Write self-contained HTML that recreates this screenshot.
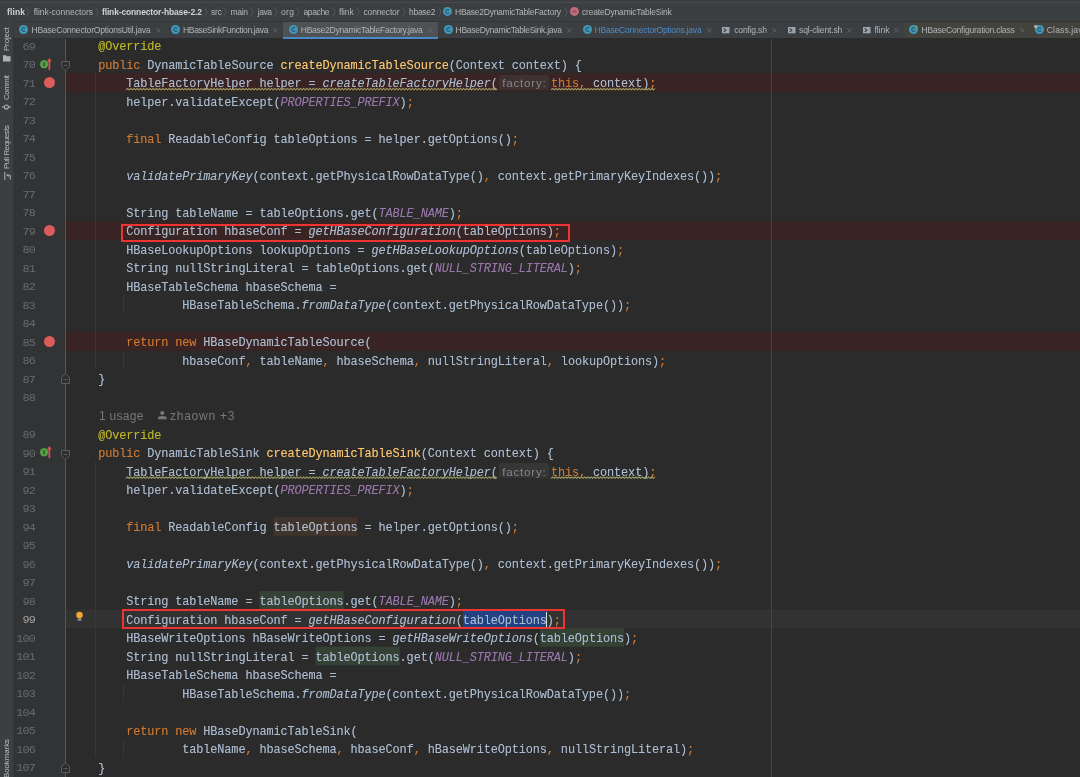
<!DOCTYPE html>
<html><head><meta charset="utf-8"><title>IDE</title><style>
*{margin:0;padding:0;box-sizing:border-box}
html,body{width:1080px;height:777px;overflow:hidden;background:#2b2b2b}
body{position:relative;font-family:"Liberation Sans",sans-serif;color:#a9b7c6}
.abs{position:absolute}
#top{left:0;top:0;width:1080px;height:21px;background:#3c3f41}
#topline{left:0;top:2px;width:1080px;height:1px;background:#47494b}
#sep1{left:0;top:20.7px;width:1080px;height:1px;background:#323436}
#tabs{left:0;top:21.7px;width:1080px;height:16.6px;background:#3c3f41}
#left{left:0;top:21px;width:13px;height:756px;background:#3c3f41}
#leftb{left:13px;top:21px;width:1px;height:756px;background:#353739}
#gutter{left:14px;top:38.3px;width:51px;height:738.7px;background:#313335}
#gline{left:65px;top:39px;width:1px;height:738px;background:#555555}
#margin{left:771px;top:39px;width:1px;height:738px;background:#454545}
.bc{top:3.5px;height:16px;line-height:16px;font-size:8.5px;color:#b4b6b8;white-space:pre}
.bcb{font-weight:bold;color:#cfd1d3}
.tab{top:22.3px;height:16px;line-height:16px;font-size:8.6px;color:#b2b4b6;white-space:pre}
.tx{top:22px;height:16px;line-height:16px;font-size:9px;color:#6e7173;white-space:pre;width:10px;text-align:center}
.row{left:66px;width:1014px;height:18.5px}
.bp{background:#3a2323}
.cur{background:#323232}
.code{font-family:"Liberation Mono",monospace;font-size:11.9px;letter-spacing:-0.1261621093750005px;white-space:pre;height:18.5px;line-height:18.5px;color:#abbcd0}
.ln{font-family:"Liberation Mono",monospace;font-size:11.8px;letter-spacing:-0.9px;white-space:pre;height:18.5px;line-height:18.5px;color:#676b6f;left:5px;width:29.9px;text-align:right}
.k{color:#cc7832}.m{color:#ffc66d}.a{color:#bbb529}.i{font-style:italic}.c{color:#9876aa;font-style:italic}

.ig{width:1px;background:#373737}
.hint{background:#363636;border-radius:2.5px;height:15px}
.hintt{font-size:11.6px;color:#858789;height:15px;line-height:15px;white-space:pre}
  .inl{font-size:12px;color:#787878;white-space:pre;height:18.5px;line-height:18.5px}
.redbox{border:2.5px solid #ee3333}
.vt{font-size:7.8px;color:#bbbbbb;white-space:pre;transform-origin:0 0;transform:rotate(-90deg);height:10px;line-height:10px}
svg{position:absolute;overflow:visible}
.code,.ln,.tab,.bc,.vt,.hintt,.inl{filter:blur(0.25px)}
.code{text-shadow:0 0 0.4px color-mix(in srgb, currentColor 45%, transparent)}
</style></head><body>
<div class="abs" id="top"></div><div class="abs" id="topline"></div><div class="abs" id="sep1"></div>
<div class="abs" id="tabs"></div>
<div class="abs" style="left:903.5px;top:21.7px;width:176.5px;height:16.6px;background:#43423d"></div>
<div class="abs" style="left:283px;top:21.9px;width:155px;height:15.1px;background:#4e5254"></div>
<div class="abs" style="left:283px;top:37px;width:155px;height:2px;background:#4a88c7"></div>
<div class="abs" id="left"></div><div class="abs" id="leftb"></div>
<div class="abs" id="gutter"></div>
<div class="abs bc bcb" style="left:7.00px;letter-spacing:0.128px;">flink</div>
<div class="abs bc" style="left:33.75px;letter-spacing:-0.018px;">flink-connectors</div>
<div class="abs bc bcb" style="left:102.00px;letter-spacing:-0.144px;">flink-connector-hbase-2.2</div>
<div class="abs bc" style="left:211.00px;letter-spacing:-0.163px;">src</div>
<div class="abs bc" style="left:230.50px;letter-spacing:-0.308px;">main</div>
<div class="abs bc" style="left:257.71px;letter-spacing:-0.437px;">java</div>
<div class="abs bc" style="left:281.00px;letter-spacing:0.359px;">org</div>
<div class="abs bc" style="left:303.50px;letter-spacing:-0.376px;">apache</div>
<div class="abs bc" style="left:339.00px;letter-spacing:-0.095px;">flink</div>
<div class="abs bc" style="left:363.50px;letter-spacing:-0.167px;">connector</div>
<div class="abs bc" style="left:409.00px;letter-spacing:-0.276px;">hbase2</div>
<div class="abs bc" style="left:455.00px;letter-spacing:-0.249px;">HBase2DynamicTableFactory</div>
<div class="abs bc" style="left:582.00px;letter-spacing:-0.182px;">createDynamicTableSink</div>
<svg style="left:26.0px;top:6.8px" width="4" height="10" viewBox="0 0 4 10"><path d="M0.5 0.2 L3.2 5 L0.5 9.8" fill="none" stroke="#5c5f61" stroke-width="0.7"/></svg>
<svg style="left:94.5px;top:6.8px" width="4" height="10" viewBox="0 0 4 10"><path d="M0.5 0.2 L3.2 5 L0.5 9.8" fill="none" stroke="#5c5f61" stroke-width="0.7"/></svg>
<svg style="left:203.5px;top:6.8px" width="4" height="10" viewBox="0 0 4 10"><path d="M0.5 0.2 L3.2 5 L0.5 9.8" fill="none" stroke="#5c5f61" stroke-width="0.7"/></svg>
<svg style="left:223.0px;top:6.8px" width="4" height="10" viewBox="0 0 4 10"><path d="M0.5 0.2 L3.2 5 L0.5 9.8" fill="none" stroke="#5c5f61" stroke-width="0.7"/></svg>
<svg style="left:249.5px;top:6.8px" width="4" height="10" viewBox="0 0 4 10"><path d="M0.5 0.2 L3.2 5 L0.5 9.8" fill="none" stroke="#5c5f61" stroke-width="0.7"/></svg>
<svg style="left:273.5px;top:6.8px" width="4" height="10" viewBox="0 0 4 10"><path d="M0.5 0.2 L3.2 5 L0.5 9.8" fill="none" stroke="#5c5f61" stroke-width="0.7"/></svg>
<svg style="left:296.0px;top:6.8px" width="4" height="10" viewBox="0 0 4 10"><path d="M0.5 0.2 L3.2 5 L0.5 9.8" fill="none" stroke="#5c5f61" stroke-width="0.7"/></svg>
<svg style="left:331.5px;top:6.8px" width="4" height="10" viewBox="0 0 4 10"><path d="M0.5 0.2 L3.2 5 L0.5 9.8" fill="none" stroke="#5c5f61" stroke-width="0.7"/></svg>
<svg style="left:355.5px;top:6.8px" width="4" height="10" viewBox="0 0 4 10"><path d="M0.5 0.2 L3.2 5 L0.5 9.8" fill="none" stroke="#5c5f61" stroke-width="0.7"/></svg>
<svg style="left:401.5px;top:6.8px" width="4" height="10" viewBox="0 0 4 10"><path d="M0.5 0.2 L3.2 5 L0.5 9.8" fill="none" stroke="#5c5f61" stroke-width="0.7"/></svg>
<svg style="left:437.5px;top:6.8px" width="4" height="10" viewBox="0 0 4 10"><path d="M0.5 0.2 L3.2 5 L0.5 9.8" fill="none" stroke="#5c5f61" stroke-width="0.7"/></svg>
<svg style="left:564.0px;top:6.8px" width="4" height="10" viewBox="0 0 4 10"><path d="M0.5 0.2 L3.2 5 L0.5 9.8" fill="none" stroke="#5c5f61" stroke-width="0.7"/></svg>
<svg style="left:443.35px;top:6.95px" width="8.90" height="8.90" viewBox="0 0 10 10"><circle cx="5" cy="5" r="5" fill="#4098b8"/><path d="M6.8 3.7 A2.1 2.1 0 1 0 6.8 6.3" fill="none" stroke="#2b5a74" stroke-width="1.25"/></svg>
<svg style="left:570.05px;top:6.95px" width="8.90" height="8.90" viewBox="0 0 10 10"><circle cx="5" cy="5" r="5" fill="#bf6d7d"/><path d="M3.2 6.5 V4.3 M3.2 4.9 Q4.0 3.8 4.95 4.7 V6.5 M4.95 4.9 Q5.8 3.8 6.75 4.7 V6.5" fill="none" stroke="#7d4450" stroke-width="0.9"/></svg>
<svg style="left:19.30px;top:25.40px" width="9.00" height="9.00" viewBox="0 0 10 10"><circle cx="5" cy="5" r="5" fill="#4098b8"/><path d="M6.8 3.7 A2.1 2.1 0 1 0 6.8 6.3" fill="none" stroke="#2b5a74" stroke-width="1.25"/></svg>
<div class="abs tab" style="left:31.50px;letter-spacing:-0.224px;color:#b2b4b6">HBaseConnectorOptionsUtil.java</div>
<svg style="left:155.60px;top:27.7px" width="4.8" height="4.8" viewBox="0 0 6 6"><path d="M0.3 0.3 L5.7 5.7 M5.7 0.3 L0.3 5.7" stroke="#6a6d6f" stroke-width="0.95" fill="none"/></svg>
<svg style="left:170.80px;top:25.40px" width="9.00" height="9.00" viewBox="0 0 10 10"><circle cx="5" cy="5" r="5" fill="#4098b8"/><path d="M6.8 3.7 A2.1 2.1 0 1 0 6.8 6.3" fill="none" stroke="#2b5a74" stroke-width="1.25"/></svg>
<div class="abs tab" style="left:183.00px;letter-spacing:-0.390px;color:#b2b4b6">HBaseSinkFunction.java</div>
<svg style="left:273.35px;top:27.7px" width="4.8" height="4.8" viewBox="0 0 6 6"><path d="M0.3 0.3 L5.7 5.7 M5.7 0.3 L0.3 5.7" stroke="#6a6d6f" stroke-width="0.95" fill="none"/></svg>
<svg style="left:288.80px;top:25.40px" width="9.00" height="9.00" viewBox="0 0 10 10"><circle cx="5" cy="5" r="5" fill="#4098b8"/><path d="M6.8 3.7 A2.1 2.1 0 1 0 6.8 6.3" fill="none" stroke="#2b5a74" stroke-width="1.25"/></svg>
<div class="abs tab" style="left:300.75px;letter-spacing:-0.296px;color:#b2b4b6">HBase2DynamicTableFactory.java</div>
<svg style="left:428.10px;top:27.7px" width="4.8" height="4.8" viewBox="0 0 6 6"><path d="M0.3 0.3 L5.7 5.7 M5.7 0.3 L0.3 5.7" stroke="#6a6d6f" stroke-width="0.95" fill="none"/></svg>
<svg style="left:443.55px;top:25.40px" width="9.00" height="9.00" viewBox="0 0 10 10"><circle cx="5" cy="5" r="5" fill="#4098b8"/><path d="M6.8 3.7 A2.1 2.1 0 1 0 6.8 6.3" fill="none" stroke="#2b5a74" stroke-width="1.25"/></svg>
<div class="abs tab" style="left:455.50px;letter-spacing:-0.329px;color:#b2b4b6">HBaseDynamicTableSink.java</div>
<svg style="left:567.10px;top:27.7px" width="4.8" height="4.8" viewBox="0 0 6 6"><path d="M0.3 0.3 L5.7 5.7 M5.7 0.3 L0.3 5.7" stroke="#6a6d6f" stroke-width="0.95" fill="none"/></svg>
<svg style="left:582.55px;top:25.40px" width="9.00" height="9.00" viewBox="0 0 10 10"><circle cx="5" cy="5" r="5" fill="#4098b8"/><path d="M6.8 3.7 A2.1 2.1 0 1 0 6.8 6.3" fill="none" stroke="#2b5a74" stroke-width="1.25"/></svg>
<div class="abs tab" style="left:594.50px;letter-spacing:-0.242px;color:#4e8ac9">HBaseConnectorOptions.java</div>
<svg style="left:706.60px;top:27.7px" width="4.8" height="4.8" viewBox="0 0 6 6"><path d="M0.3 0.3 L5.7 5.7 M5.7 0.3 L0.3 5.7" stroke="#6a6d6f" stroke-width="0.95" fill="none"/></svg>
<svg style="left:722.25px;top:26.8px" width="7.5" height="6.3" viewBox="0 0 7.5 6.3"><rect x="0" y="0" width="7.5" height="6.3" fill="#9ba5ad"/><path d="M1.7 1.4 L3.9 3.15 L1.7 4.9" fill="none" stroke="#3c3f41" stroke-width="1.15"/></svg>
<div class="abs tab" style="left:734.25px;letter-spacing:-0.209px;color:#b2b4b6">config.sh</div>
<svg style="left:771.60px;top:27.7px" width="4.8" height="4.8" viewBox="0 0 6 6"><path d="M0.3 0.3 L5.7 5.7 M5.7 0.3 L0.3 5.7" stroke="#6a6d6f" stroke-width="0.95" fill="none"/></svg>
<svg style="left:787.50px;top:26.8px" width="7.5" height="6.3" viewBox="0 0 7.5 6.3"><rect x="0" y="0" width="7.5" height="6.3" fill="#9ba5ad"/><path d="M1.7 1.4 L3.9 3.15 L1.7 4.9" fill="none" stroke="#3c3f41" stroke-width="1.15"/></svg>
<div class="abs tab" style="left:799.00px;letter-spacing:-0.167px;color:#b2b4b6">sql-client.sh</div>
<svg style="left:846.60px;top:27.7px" width="4.8" height="4.8" viewBox="0 0 6 6"><path d="M0.3 0.3 L5.7 5.7 M5.7 0.3 L0.3 5.7" stroke="#6a6d6f" stroke-width="0.95" fill="none"/></svg>
<svg style="left:862.75px;top:26.8px" width="7.5" height="6.3" viewBox="0 0 7.5 6.3"><rect x="0" y="0" width="7.5" height="6.3" fill="#9ba5ad"/><path d="M1.7 1.4 L3.9 3.15 L1.7 4.9" fill="none" stroke="#3c3f41" stroke-width="1.15"/></svg>
<div class="abs tab" style="left:874.40px;letter-spacing:-0.052px;color:#b2b4b6">flink</div>
<svg style="left:893.90px;top:27.7px" width="4.8" height="4.8" viewBox="0 0 6 6"><path d="M0.3 0.3 L5.7 5.7 M5.7 0.3 L0.3 5.7" stroke="#6a6d6f" stroke-width="0.95" fill="none"/></svg>
<svg style="left:909.30px;top:25.40px" width="9.00" height="9.00" viewBox="0 0 10 10"><circle cx="5" cy="5" r="5" fill="#4098b8"/><path d="M6.8 3.7 A2.1 2.1 0 1 0 6.8 6.3" fill="none" stroke="#2b5a74" stroke-width="1.25"/></svg>
<div class="abs tab" style="left:921.50px;letter-spacing:-0.245px;color:#b2b4b6">HBaseConfiguration.class</div>
<svg style="left:1019.60px;top:27.7px" width="4.8" height="4.8" viewBox="0 0 6 6"><path d="M0.3 0.3 L5.7 5.7 M5.7 0.3 L0.3 5.7" stroke="#6a6d6f" stroke-width="0.95" fill="none"/></svg>
<svg style="left:1034.60px;top:25.40px" width="9.00" height="9.00" viewBox="0 0 10 10"><circle cx="5" cy="5" r="5" fill="#4098b8"/><path d="M6.8 3.7 A2.1 2.1 0 1 0 6.8 6.3" fill="none" stroke="#2b5a74" stroke-width="1.25"/></svg>
<div class="abs tab" style="left:1046.80px;letter-spacing:0.112px;color:#b2b4b6">Class.java</div>
<svg style="left:915px;top:25px" width="3.4" height="3.4" viewBox="0 0 4 4"><path d="M0.3 0.3 L3.8 2 L0.3 3.8 Z" fill="#62b543"/></svg>
<svg style="left:1034px;top:25px" width="3.6" height="3.2" viewBox="0 0 4 4"><rect x="0" y="0" width="4" height="4" rx="1" fill="#a8abad"/></svg>
<div class="abs vt" style="left:1.8px;top:50.80px;letter-spacing:-0.080px">Project</div>
<div class="abs vt" style="left:1.8px;top:100.00px;letter-spacing:-0.374px">Commit</div>
<div class="abs vt" style="left:1.8px;top:169.40px;letter-spacing:-0.344px">Pull Requests</div>
<div class="abs vt" style="left:1.8px;top:777.71px;letter-spacing:-0.001px">Bookmarks</div>
<svg style="left:3.2px;top:54.5px" width="7.5" height="6.5" viewBox="0 0 7.5 6.5"><path d="M0 0.3 H3 L3.8 1.3 H7.5 V6.5 H0 Z" fill="#afb1b3"/></svg>
<svg style="left:2px;top:103px" width="9" height="8" viewBox="0 0 9 8"><path d="M0 4 H9" stroke="#afb1b3" stroke-width="1"/><circle cx="4.4" cy="4" r="2" fill="#3c3f41" stroke="#afb1b3" stroke-width="1.1"/></svg>
<svg style="left:3.5px;top:172.2px" width="7" height="8" viewBox="0 0 7 8"><path d="M0.8 0 V8 M3 3.3 H6.2 V7.6 M4.4 1.9 L3 3.3 L4.4 4.7" stroke="#afb1b3" stroke-width="1" fill="none"/></svg>
<svg style="left:0;top:0" width="1080" height="777"><rect x="66" y="73.10" width="1014" height="18.7" fill="#3a2323"/></svg>
<svg style="left:0;top:0" width="1080" height="777"><rect x="66" y="221.10" width="1014" height="18.7" fill="#3a2323"/></svg>
<svg style="left:0;top:0" width="1080" height="777"><rect x="66" y="332.10" width="1014" height="18.7" fill="#3a2323"/></svg>
<svg style="left:0;top:0" width="1080" height="777"><rect x="66" y="609.60" width="1014" height="18.7" fill="#323232"/></svg>
<svg style="left:0;top:0" width="1080" height="777"><rect x="273.52" y="517.10" width="84.18" height="18.7" fill="#40332b"/></svg>
<svg style="left:0;top:0" width="1080" height="777"><rect x="259.50" y="591.10" width="84.18" height="18.7" fill="#344134"/></svg>
<svg style="left:0;top:0" width="1080" height="777"><rect x="462.93" y="609.60" width="84.18" height="18.7" fill="#214283"/></svg>
<svg style="left:0;top:0" width="1080" height="777"><rect x="540.10" y="628.10" width="84.18" height="18.7" fill="#344134"/></svg>
<svg style="left:0;top:0" width="1080" height="777"><rect x="315.62" y="646.60" width="84.18" height="18.7" fill="#344134"/></svg>
<div class="abs" id="margin"></div><div class="abs" id="gline"></div>
<div class="abs ig" style="left:95.0px;top:73.2px;height:296.0px"></div>
<div class="abs ig" style="left:95.0px;top:461.7px;height:296.0px"></div>
<div class="abs ig" style="left:123.0px;top:295.2px;height:18.5px"></div>
<div class="abs ig" style="left:123.0px;top:350.7px;height:18.5px"></div>
<div class="abs ig" style="left:123.0px;top:683.7px;height:18.5px"></div>
<div class="abs ig" style="left:123.0px;top:739.2px;height:18.5px"></div>
<div class="abs ln" style="top:37.6px">69</div>
<div class="abs code" style="left:98.2px;top:38.2px"><span class="a">@Override</span></div>
<div class="abs ln" style="top:56.1px">70</div>
<div class="abs code" style="left:98.2px;top:56.7px"><span class="k">public </span>DynamicTableSource <span class="m">createDynamicTableSource</span>(Context context) {</div>
<div class="abs ln" style="top:74.6px">71</div>
<div class="abs code" style="left:98.2px;top:75.2px">    TableFactoryHelper helper = <span class="i">createTableFactoryHelper</span>(</div>
<div class="abs hint" style="left:499px;top:74.9px;width:50px;background:#3e3131"></div>
<div class="abs hintt" style="left:502.30px;letter-spacing:0.765px;top:75.0px">factory:</div>
<div class="abs code" style="left:551px;top:75.2px"><span class="k">this,</span> context)<span class="k">;</span></div>
<svg style="left:0;top:0" width="1" height="1"><path d="M126.0 89.9 L127.6 88.4 L129.2 89.9 L130.8 88.4 L132.4 89.9 L134.0 88.4 L135.6 89.9 L137.2 88.4 L138.8 89.9 L140.4 88.4 L142.0 89.9 L143.6 88.4 L145.2 89.9 L146.8 88.4 L148.4 89.9 L150.0 88.4 L151.6 89.9 L153.2 88.4 L154.8 89.9 L156.4 88.4 L158.0 89.9 L159.6 88.4 L161.2 89.9 L162.8 88.4 L164.4 89.9 L166.0 88.4 L167.6 89.9 L169.2 88.4 L170.8 89.9 L172.4 88.4 L174.0 89.9 L175.6 88.4 L177.2 89.9 L178.8 88.4 L180.4 89.9 L182.0 88.4 L183.6 89.9 L185.2 88.4 L186.8 89.9 L188.4 88.4 L190.0 89.9 L191.6 88.4 L193.2 89.9 L194.8 88.4 L196.4 89.9 L198.0 88.4 L199.6 89.9 L201.2 88.4 L202.8 89.9 L204.4 88.4 L206.0 89.9 L207.6 88.4 L209.2 89.9 L210.8 88.4 L212.4 89.9 L214.0 88.4 L215.6 89.9 L217.2 88.4 L218.8 89.9 L220.4 88.4 L222.0 89.9 L223.6 88.4 L225.2 89.9 L226.8 88.4 L228.4 89.9 L230.0 88.4 L231.6 89.9 L233.2 88.4 L234.8 89.9 L236.4 88.4 L238.0 89.9 L239.6 88.4 L241.2 89.9 L242.8 88.4 L244.4 89.9 L246.0 88.4 L247.6 89.9 L249.2 88.4 L250.8 89.9 L252.4 88.4 L254.0 89.9 L255.6 88.4 L257.2 89.9 L258.8 88.4 L260.4 89.9 L262.0 88.4 L263.6 89.9 L265.2 88.4 L266.8 89.9 L268.4 88.4 L270.0 89.9 L271.6 88.4 L273.2 89.9 L274.8 88.4 L276.4 89.9 L278.0 88.4 L279.6 89.9 L281.2 88.4 L282.8 89.9 L284.4 88.4 L286.0 89.9 L287.6 88.4 L289.2 89.9 L290.8 88.4 L292.4 89.9 L294.0 88.4 L295.6 89.9 L297.2 88.4 L298.8 89.9 L300.4 88.4 L302.0 89.9 L303.6 88.4 L305.2 89.9 L306.8 88.4 L308.4 89.9 L310.0 88.4 L311.6 89.9 L313.2 88.4 L314.8 89.9 L316.4 88.4 L318.0 89.9 L319.6 88.4 L321.2 89.9 L322.8 88.4 L324.4 89.9 L326.0 88.4 L327.6 89.9 L329.2 88.4 L330.8 89.9 L332.4 88.4 L334.0 89.9 L335.6 88.4 L337.2 89.9 L338.8 88.4 L340.4 89.9 L342.0 88.4 L343.6 89.9 L345.2 88.4 L346.8 89.9 L348.4 88.4 L350.0 89.9 L351.6 88.4 L353.2 89.9 L354.8 88.4 L356.4 89.9 L358.0 88.4 L359.6 89.9 L361.2 88.4 L362.8 89.9 L364.4 88.4 L366.0 89.9 L367.6 88.4 L369.2 89.9 L370.8 88.4 L372.4 89.9 L374.0 88.4 L375.6 89.9 L377.2 88.4 L378.8 89.9 L380.4 88.4 L382.0 89.9 L383.6 88.4 L385.2 89.9 L386.8 88.4 L388.4 89.9 L390.0 88.4 L391.6 89.9 L393.2 88.4 L394.8 89.9 L396.4 88.4 L398.0 89.9 L399.6 88.4 L401.2 89.9 L402.8 88.4 L404.4 89.9 L406.0 88.4 L407.6 89.9 L409.2 88.4 L410.8 89.9 L412.4 88.4 L414.0 89.9 L415.6 88.4 L417.2 89.9 L418.8 88.4 L420.4 89.9 L422.0 88.4 L423.6 89.9 L425.2 88.4 L426.8 89.9 L428.4 88.4 L430.0 89.9 L431.6 88.4 L433.2 89.9 L434.8 88.4 L436.4 89.9 L438.0 88.4 L439.6 89.9 L441.2 88.4 L442.8 89.9 L444.4 88.4 L446.0 89.9 L447.6 88.4 L449.2 89.9 L450.8 88.4 L452.4 89.9 L454.0 88.4 L455.6 89.9 L457.2 88.4 L458.8 89.9 L460.4 88.4 L462.0 89.9 L463.6 88.4 L465.2 89.9 L466.8 88.4 L468.4 89.9 L470.0 88.4 L471.6 89.9 L473.2 88.4 L474.8 89.9 L476.4 88.4 L478.0 89.9 L479.6 88.4 L481.2 89.9 L482.8 88.4 L484.4 89.9 L486.0 88.4 L487.6 89.9 L489.2 88.4 L490.8 89.9 L492.4 88.4 L494.0 89.9 L495.6 88.4 L497.2 89.9" fill="none" stroke="#9a9a62" stroke-width="1.1" stroke-linejoin="round"/></svg>
<svg style="left:0;top:0" width="1" height="1"><path d="M551.0 89.9 L552.6 88.4 L554.2 89.9 L555.8 88.4 L557.4 89.9 L559.0 88.4 L560.6 89.9 L562.2 88.4 L563.8 89.9 L565.4 88.4 L567.0 89.9 L568.6 88.4 L570.2 89.9 L571.8 88.4 L573.4 89.9 L575.0 88.4 L576.6 89.9 L578.2 88.4 L579.8 89.9 L581.4 88.4 L583.0 89.9 L584.6 88.4 L586.2 89.9 L587.8 88.4 L589.4 89.9 L591.0 88.4 L592.6 89.9 L594.2 88.4 L595.8 89.9 L597.4 88.4 L599.0 89.9 L600.6 88.4 L602.2 89.9 L603.8 88.4 L605.4 89.9 L607.0 88.4 L608.6 89.9 L610.2 88.4 L611.8 89.9 L613.4 88.4 L615.0 89.9 L616.6 88.4 L618.2 89.9 L619.8 88.4 L621.4 89.9 L623.0 88.4 L624.6 89.9 L626.2 88.4 L627.8 89.9 L629.4 88.4 L631.0 89.9 L632.6 88.4 L634.2 89.9 L635.8 88.4 L637.4 89.9 L639.0 88.4 L640.6 89.9 L642.2 88.4 L643.8 89.9 L645.4 88.4 L647.0 89.9 L648.6 88.4 L650.2 89.9 L651.8 88.4 L653.4 89.9 L655.0 88.4" fill="none" stroke="#9a9a62" stroke-width="1.1" stroke-linejoin="round"/></svg>
<div class="abs ln" style="top:93.1px">72</div>
<div class="abs code" style="left:98.2px;top:93.7px">    helper.validateExcept(<span class="c">PROPERTIES_PREFIX</span>)<span class="k">;</span></div>
<div class="abs ln" style="top:111.6px">73</div>
<div class="abs ln" style="top:130.1px">74</div>
<div class="abs code" style="left:98.2px;top:130.7px">    <span class="k">final </span>ReadableConfig tableOptions = helper.getOptions()<span class="k">;</span></div>
<div class="abs ln" style="top:148.6px">75</div>
<div class="abs ln" style="top:167.1px">76</div>
<div class="abs code" style="left:98.2px;top:167.7px">    <span class="i">validatePrimaryKey</span>(context.getPhysicalRowDataType()<span class="k">,</span> context.getPrimaryKeyIndexes())<span class="k">;</span></div>
<div class="abs ln" style="top:185.6px">77</div>
<div class="abs ln" style="top:204.1px">78</div>
<div class="abs code" style="left:98.2px;top:204.7px">    String tableName = tableOptions.get(<span class="c">TABLE_NAME</span>)<span class="k">;</span></div>
<div class="abs ln" style="top:222.6px">79</div>
<div class="abs code" style="left:98.2px;top:223.2px">    Configuration hbaseConf = <span class="i">getHBaseConfiguration</span>(tableOptions)<span class="k">;</span></div>
<div class="abs ln" style="top:241.1px">80</div>
<div class="abs code" style="left:98.2px;top:241.7px">    HBaseLookupOptions lookupOptions = <span class="i">getHBaseLookupOptions</span>(tableOptions)<span class="k">;</span></div>
<div class="abs ln" style="top:259.6px">81</div>
<div class="abs code" style="left:98.2px;top:260.2px">    String nullStringLiteral = tableOptions.get(<span class="c">NULL_STRING_LITERAL</span>)<span class="k">;</span></div>
<div class="abs ln" style="top:278.1px">82</div>
<div class="abs code" style="left:98.2px;top:278.7px">    HBaseTableSchema hbaseSchema =</div>
<div class="abs ln" style="top:296.6px">83</div>
<div class="abs code" style="left:98.2px;top:297.2px">            HBaseTableSchema.<span class="i">fromDataType</span>(context.getPhysicalRowDataType())<span class="k">;</span></div>
<div class="abs ln" style="top:315.1px">84</div>
<div class="abs ln" style="top:333.6px">85</div>
<div class="abs code" style="left:98.2px;top:334.2px">    <span class="k">return new </span>HBaseDynamicTableSource(</div>
<div class="abs ln" style="top:352.1px">86</div>
<div class="abs code" style="left:98.2px;top:352.7px">            hbaseConf<span class="k">,</span> tableName<span class="k">,</span> hbaseSchema<span class="k">,</span> nullStringLiteral<span class="k">,</span> lookupOptions)<span class="k">;</span></div>
<div class="abs ln" style="top:370.6px">87</div>
<div class="abs code" style="left:98.2px;top:371.2px">}</div>
<div class="abs ln" style="top:389.1px">88</div>
<div class="abs inl" style="left:98.90px;letter-spacing:0.285px;top:406.7px">1 usage</div>
<svg style="left:158.3px;top:410.8px" width="8.6" height="8.2" viewBox="0 0 8.6 8.2"><circle cx="4.3" cy="2.1" r="2.1" fill="#787878"/><path d="M0 8.2 V6.9 Q0 5 4.3 5 Q8.6 5 8.6 6.9 V8.2 Z" fill="#787878"/></svg>
<div class="abs inl" style="left:170.00px;letter-spacing:0.753px;top:406.7px">zhaown +3</div>
<div class="abs ln" style="top:426.1px">89</div>
<div class="abs code" style="left:98.2px;top:426.7px"><span class="a">@Override</span></div>
<div class="abs ln" style="top:444.6px">90</div>
<div class="abs code" style="left:98.2px;top:445.2px"><span class="k">public </span>DynamicTableSink <span class="m">createDynamicTableSink</span>(Context context) {</div>
<div class="abs ln" style="top:463.1px">91</div>
<div class="abs code" style="left:98.2px;top:463.7px">    TableFactoryHelper helper = <span class="i">createTableFactoryHelper</span>(</div>
<div class="abs hint" style="left:499px;top:463.4px;width:50px"></div>
<div class="abs hintt" style="left:502.30px;letter-spacing:0.765px;top:463.5px">factory:</div>
<div class="abs code" style="left:551px;top:463.7px"><span class="k">this,</span> context)<span class="k">;</span></div>
<svg style="left:0;top:0" width="1" height="1"><path d="M126.0 478.4 L127.6 476.9 L129.2 478.4 L130.8 476.9 L132.4 478.4 L134.0 476.9 L135.6 478.4 L137.2 476.9 L138.8 478.4 L140.4 476.9 L142.0 478.4 L143.6 476.9 L145.2 478.4 L146.8 476.9 L148.4 478.4 L150.0 476.9 L151.6 478.4 L153.2 476.9 L154.8 478.4 L156.4 476.9 L158.0 478.4 L159.6 476.9 L161.2 478.4 L162.8 476.9 L164.4 478.4 L166.0 476.9 L167.6 478.4 L169.2 476.9 L170.8 478.4 L172.4 476.9 L174.0 478.4 L175.6 476.9 L177.2 478.4 L178.8 476.9 L180.4 478.4 L182.0 476.9 L183.6 478.4 L185.2 476.9 L186.8 478.4 L188.4 476.9 L190.0 478.4 L191.6 476.9 L193.2 478.4 L194.8 476.9 L196.4 478.4 L198.0 476.9 L199.6 478.4 L201.2 476.9 L202.8 478.4 L204.4 476.9 L206.0 478.4 L207.6 476.9 L209.2 478.4 L210.8 476.9 L212.4 478.4 L214.0 476.9 L215.6 478.4 L217.2 476.9 L218.8 478.4 L220.4 476.9 L222.0 478.4 L223.6 476.9 L225.2 478.4 L226.8 476.9 L228.4 478.4 L230.0 476.9 L231.6 478.4 L233.2 476.9 L234.8 478.4 L236.4 476.9 L238.0 478.4 L239.6 476.9 L241.2 478.4 L242.8 476.9 L244.4 478.4 L246.0 476.9 L247.6 478.4 L249.2 476.9 L250.8 478.4 L252.4 476.9 L254.0 478.4 L255.6 476.9 L257.2 478.4 L258.8 476.9 L260.4 478.4 L262.0 476.9 L263.6 478.4 L265.2 476.9 L266.8 478.4 L268.4 476.9 L270.0 478.4 L271.6 476.9 L273.2 478.4 L274.8 476.9 L276.4 478.4 L278.0 476.9 L279.6 478.4 L281.2 476.9 L282.8 478.4 L284.4 476.9 L286.0 478.4 L287.6 476.9 L289.2 478.4 L290.8 476.9 L292.4 478.4 L294.0 476.9 L295.6 478.4 L297.2 476.9 L298.8 478.4 L300.4 476.9 L302.0 478.4 L303.6 476.9 L305.2 478.4 L306.8 476.9 L308.4 478.4 L310.0 476.9 L311.6 478.4 L313.2 476.9 L314.8 478.4 L316.4 476.9 L318.0 478.4 L319.6 476.9 L321.2 478.4 L322.8 476.9 L324.4 478.4 L326.0 476.9 L327.6 478.4 L329.2 476.9 L330.8 478.4 L332.4 476.9 L334.0 478.4 L335.6 476.9 L337.2 478.4 L338.8 476.9 L340.4 478.4 L342.0 476.9 L343.6 478.4 L345.2 476.9 L346.8 478.4 L348.4 476.9 L350.0 478.4 L351.6 476.9 L353.2 478.4 L354.8 476.9 L356.4 478.4 L358.0 476.9 L359.6 478.4 L361.2 476.9 L362.8 478.4 L364.4 476.9 L366.0 478.4 L367.6 476.9 L369.2 478.4 L370.8 476.9 L372.4 478.4 L374.0 476.9 L375.6 478.4 L377.2 476.9 L378.8 478.4 L380.4 476.9 L382.0 478.4 L383.6 476.9 L385.2 478.4 L386.8 476.9 L388.4 478.4 L390.0 476.9 L391.6 478.4 L393.2 476.9 L394.8 478.4 L396.4 476.9 L398.0 478.4 L399.6 476.9 L401.2 478.4 L402.8 476.9 L404.4 478.4 L406.0 476.9 L407.6 478.4 L409.2 476.9 L410.8 478.4 L412.4 476.9 L414.0 478.4 L415.6 476.9 L417.2 478.4 L418.8 476.9 L420.4 478.4 L422.0 476.9 L423.6 478.4 L425.2 476.9 L426.8 478.4 L428.4 476.9 L430.0 478.4 L431.6 476.9 L433.2 478.4 L434.8 476.9 L436.4 478.4 L438.0 476.9 L439.6 478.4 L441.2 476.9 L442.8 478.4 L444.4 476.9 L446.0 478.4 L447.6 476.9 L449.2 478.4 L450.8 476.9 L452.4 478.4 L454.0 476.9 L455.6 478.4 L457.2 476.9 L458.8 478.4 L460.4 476.9 L462.0 478.4 L463.6 476.9 L465.2 478.4 L466.8 476.9 L468.4 478.4 L470.0 476.9 L471.6 478.4 L473.2 476.9 L474.8 478.4 L476.4 476.9 L478.0 478.4 L479.6 476.9 L481.2 478.4 L482.8 476.9 L484.4 478.4 L486.0 476.9 L487.6 478.4 L489.2 476.9 L490.8 478.4 L492.4 476.9 L494.0 478.4 L495.6 476.9 L497.2 478.4" fill="none" stroke="#9a9a62" stroke-width="1.1" stroke-linejoin="round"/></svg>
<svg style="left:0;top:0" width="1" height="1"><path d="M551.0 478.4 L552.6 476.9 L554.2 478.4 L555.8 476.9 L557.4 478.4 L559.0 476.9 L560.6 478.4 L562.2 476.9 L563.8 478.4 L565.4 476.9 L567.0 478.4 L568.6 476.9 L570.2 478.4 L571.8 476.9 L573.4 478.4 L575.0 476.9 L576.6 478.4 L578.2 476.9 L579.8 478.4 L581.4 476.9 L583.0 478.4 L584.6 476.9 L586.2 478.4 L587.8 476.9 L589.4 478.4 L591.0 476.9 L592.6 478.4 L594.2 476.9 L595.8 478.4 L597.4 476.9 L599.0 478.4 L600.6 476.9 L602.2 478.4 L603.8 476.9 L605.4 478.4 L607.0 476.9 L608.6 478.4 L610.2 476.9 L611.8 478.4 L613.4 476.9 L615.0 478.4 L616.6 476.9 L618.2 478.4 L619.8 476.9 L621.4 478.4 L623.0 476.9 L624.6 478.4 L626.2 476.9 L627.8 478.4 L629.4 476.9 L631.0 478.4 L632.6 476.9 L634.2 478.4 L635.8 476.9 L637.4 478.4 L639.0 476.9 L640.6 478.4 L642.2 476.9 L643.8 478.4 L645.4 476.9 L647.0 478.4 L648.6 476.9 L650.2 478.4 L651.8 476.9 L653.4 478.4 L655.0 476.9" fill="none" stroke="#9a9a62" stroke-width="1.1" stroke-linejoin="round"/></svg>
<div class="abs ln" style="top:481.6px">92</div>
<div class="abs code" style="left:98.2px;top:482.2px">    helper.validateExcept(<span class="c">PROPERTIES_PREFIX</span>)<span class="k">;</span></div>
<div class="abs ln" style="top:500.1px">93</div>
<div class="abs ln" style="top:518.6px">94</div>
<div class="abs code" style="left:98.2px;top:519.2px">    <span class="k">final </span>ReadableConfig <span class="hw">tableOptions</span> = helper.getOptions()<span class="k">;</span></div>
<div class="abs ln" style="top:537.1px">95</div>
<div class="abs ln" style="top:555.6px">96</div>
<div class="abs code" style="left:98.2px;top:556.2px">    <span class="i">validatePrimaryKey</span>(context.getPhysicalRowDataType()<span class="k">,</span> context.getPrimaryKeyIndexes())<span class="k">;</span></div>
<div class="abs ln" style="top:574.1px">97</div>
<div class="abs ln" style="top:592.6px">98</div>
<div class="abs code" style="left:98.2px;top:593.2px">    String tableName = <span class="hr">tableOptions</span>.get(<span class="c">TABLE_NAME</span>)<span class="k">;</span></div>
<div class="abs ln" style="top:611.1px;color:#a4a3a3">99</div>
<div class="abs code" style="left:98.2px;top:611.7px">    Configuration hbaseConf = <span class="i">getHBaseConfiguration</span>(<span class="sel">tableOptions</span>)<span class="k">;</span></div>
<div class="abs ln" style="top:629.6px">100</div>
<div class="abs code" style="left:98.2px;top:630.2px">    HBaseWriteOptions hBaseWriteOptions = <span class="i">getHBaseWriteOptions</span>(<span class="hr">tableOptions</span>)<span class="k">;</span></div>
<div class="abs ln" style="top:648.1px">101</div>
<div class="abs code" style="left:98.2px;top:648.7px">    String nullStringLiteral = <span class="hr">tableOptions</span>.get(<span class="c">NULL_STRING_LITERAL</span>)<span class="k">;</span></div>
<div class="abs ln" style="top:666.6px">102</div>
<div class="abs code" style="left:98.2px;top:667.2px">    HBaseTableSchema hbaseSchema =</div>
<div class="abs ln" style="top:685.1px">103</div>
<div class="abs code" style="left:98.2px;top:685.7px">            HBaseTableSchema.<span class="i">fromDataType</span>(context.getPhysicalRowDataType())<span class="k">;</span></div>
<div class="abs ln" style="top:703.6px">104</div>
<div class="abs ln" style="top:722.1px">105</div>
<div class="abs code" style="left:98.2px;top:722.7px">    <span class="k">return new </span>HBaseDynamicTableSink(</div>
<div class="abs ln" style="top:740.6px">106</div>
<div class="abs code" style="left:98.2px;top:741.2px">            tableName<span class="k">,</span> hbaseSchema<span class="k">,</span> hbaseConf<span class="k">,</span> hBaseWriteOptions<span class="k">,</span> nullStringLiteral)<span class="k">;</span></div>
<div class="abs ln" style="top:759.1px">107</div>
<div class="abs code" style="left:98.2px;top:759.7px">}</div>
<svg style="left:43.8px;top:335.6px" width="11" height="11" viewBox="0 0 11 11"><circle cx="5.5" cy="5.5" r="5.5" fill="#db5c5c"/></svg>
<svg style="left:43.8px;top:76.6px" width="11" height="11" viewBox="0 0 11 11"><circle cx="5.5" cy="5.5" r="5.5" fill="#db5c5c"/></svg>
<svg style="left:43.8px;top:224.6px" width="11" height="11" viewBox="0 0 11 11"><circle cx="5.5" cy="5.5" r="5.5" fill="#db5c5c"/></svg>
<svg style="left:39.9px;top:57.7px" width="12" height="13" viewBox="0 0 12 13"><circle cx="4.1" cy="6.2" r="4.15" fill="#53a044"/><rect x="3.3" y="4.3" width="1.7" height="3.9" fill="#2f6128"/><path d="M9.35 0 L11.8 3.6 L6.9 3.6 Z" fill="#d9544f"/><rect x="8.5" y="3" width="1.7" height="9.1" fill="#d9544f"/></svg>
<svg style="left:39.9px;top:446.2px" width="12" height="13" viewBox="0 0 12 13"><circle cx="4.1" cy="6.2" r="4.15" fill="#53a044"/><rect x="3.3" y="4.3" width="1.7" height="3.9" fill="#2f6128"/><path d="M9.35 0 L11.8 3.6 L6.9 3.6 Z" fill="#d9544f"/><rect x="8.5" y="3" width="1.7" height="9.1" fill="#d9544f"/></svg>
<svg style="left:61px;top:61.1px" width="9" height="11" viewBox="0 0 9 11"><path d="M0.5 0.5 H8.5 V5.8 L4.5 9.8 L0.5 5.8 Z" fill="#2c2d2e" stroke="#5a5c5e" stroke-width="1"/><path d="M2.4 4.4 H6.6" stroke="#5a5c5e" stroke-width="1"/></svg>
<svg style="left:61px;top:373.0px" width="9" height="11" viewBox="0 0 9 11"><path d="M0.5 10.5 H8.5 V4.5 L4.5 0.7 L0.5 4.5 Z" fill="#2c2d2e" stroke="#5a5c5e" stroke-width="1"/><path d="M2.4 6.6 H6.6" stroke="#5a5c5e" stroke-width="1"/></svg>
<svg style="left:61px;top:449.6px" width="9" height="11" viewBox="0 0 9 11"><path d="M0.5 0.5 H8.5 V5.8 L4.5 9.8 L0.5 5.8 Z" fill="#2c2d2e" stroke="#5a5c5e" stroke-width="1"/><path d="M2.4 4.4 H6.6" stroke="#5a5c5e" stroke-width="1"/></svg>
<svg style="left:61px;top:761.5px" width="9" height="11" viewBox="0 0 9 11"><path d="M0.5 10.5 H8.5 V4.5 L4.5 0.7 L0.5 4.5 Z" fill="#2c2d2e" stroke="#5a5c5e" stroke-width="1"/><path d="M2.4 6.6 H6.6" stroke="#5a5c5e" stroke-width="1"/></svg>
<svg style="left:75.5px;top:611px" width="7" height="10.5" viewBox="0 0 7 10.5"><circle cx="3.5" cy="4.1" r="3.25" fill="#f2a735"/><rect x="1.9" y="6.2" width="3.2" height="1.3" fill="#f2a735"/><rect x="1.7" y="7.7" width="3.6" height="2.1" rx="0.6" fill="#8e9092"/></svg>
<div class="abs redbox" style="left:120.5px;top:223.5px;width:449px;height:18.5px"></div>
<div class="abs redbox" style="left:122px;top:609px;width:443px;height:20px"></div>
<div class="abs" style="left:546px;top:611.5px;width:1px;height:15px;background:#dddddd"></div>
</body></html>
